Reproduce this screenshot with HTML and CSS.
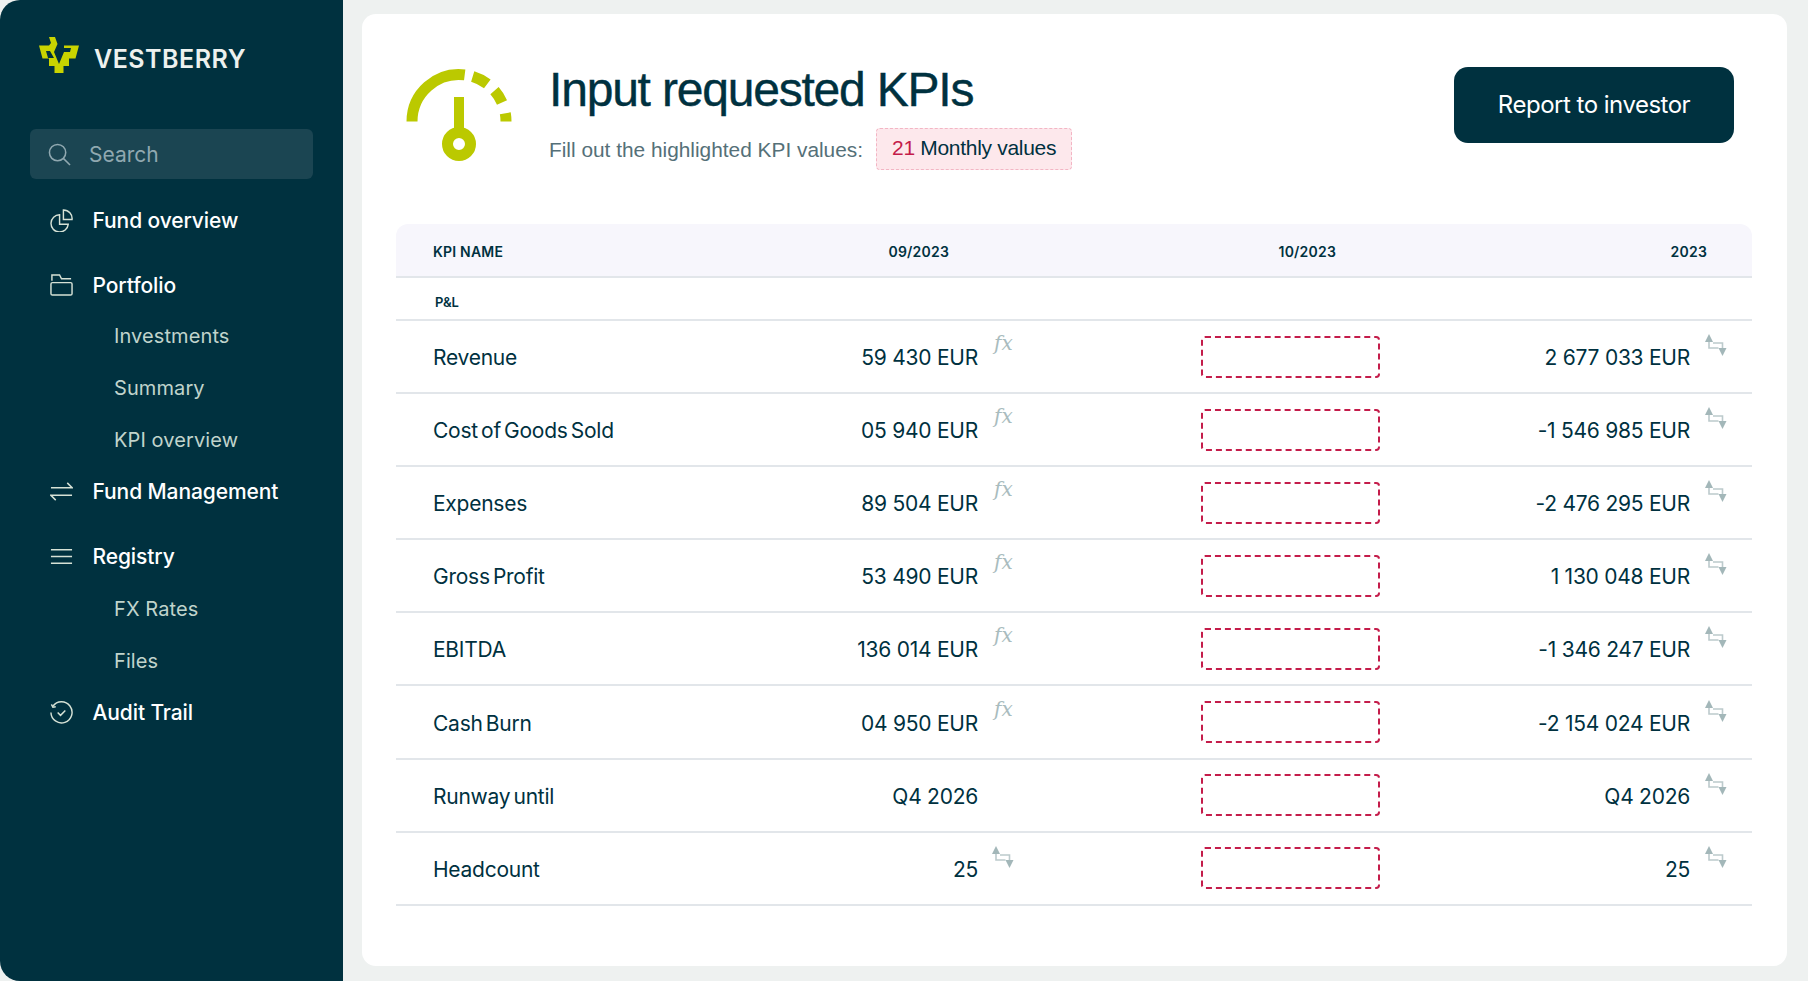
FILE: index.html
```html
<!DOCTYPE html>
<html lang="en">
<head>
    <meta charset="UTF-8">
    <meta name="viewport" content="width=device-width, initial-scale=1.0">
    <title>Input requested KPIs</title>
    <link rel="stylesheet" href="styles.css">
</head>
<body>
    <aside class="sidebar">
        <div class="brand">
            <svg class="brand-mark" viewBox="0 0 41 36"><path fill-rule="evenodd" d="M0 8.5H10L12 6 10 0H16L18.5 7 15 15 20 27 25 15H31L32 11H25V8.5H40L36.5 21.5H30V29H24.5V36H15.5V29H10V21.5H3.5ZM7 14H11L15 21H9Z"/></svg>
            <span class="brand-name">VESTBERRY</span>
        </div>
        <div class="search">
            <svg class="search-icon" viewBox="0 0 24 24"><circle cx="10" cy="10" r="8.5"/><path d="M16 16l7 7"/></svg>
            <span>Search</span>
        </div>
        <nav class="nav">
            <a class="nav-item spaced">
                <svg class="nav-icon" viewBox="0 0 24 24"><path d="M10 6a9 9 0 1 0 9 10h-9z"/><path d="M14 1a9 9 0 0 1 9 10h-9z"/></svg>
                Fund overview
            </a>
            <a class="nav-item">
                <svg class="nav-icon" viewBox="0 0 24 24"><path d="M2 7V1h8l2 4h10"/><rect x="1" y="9" width="22" height="13" rx="1.5"/></svg>
                Portfolio
            </a>
            <a class="nav-sub">Investments</a>
            <a class="nav-sub">Summary</a>
            <a class="nav-sub">KPI overview</a>
            <a class="nav-item spaced">
                <svg class="nav-icon" viewBox="0 0 24 24"><path d="M1 8h22l-5-5"/><path d="M23 16H1l5 5"/></svg>
                Fund Management
            </a>
            <a class="nav-item">
                <svg class="nav-icon" viewBox="0 0 24 24"><path d="M1 5h22M1 12h22M1 19h22"/></svg>
                Registry
            </a>
            <a class="nav-sub first">FX Rates</a>
            <a class="nav-sub">Files</a>
            <a class="nav-item">
                <svg class="nav-icon" viewBox="0 0 24 24"><path d="M3 5.5A11 11 0 1 1 1 12"/><path d="M1.5 3.5L3 6.5l3-.5"/><path d="M8 12l3 3 5-5"/></svg>
                Audit Trail
            </a>
        </nav>
    </aside>

    <main class="content">
        <header class="page-head">
            <svg class="gauge" viewBox="0 0 130 120">
                <path class="gauge-line" d="M17 66.5A47 47 0 0 1 69.7 19.85"/>
                <path class="gauge-line" d="M77.7 21.55A47 47 0 0 1 92.3 28.95"/>
                <path class="gauge-line" d="M99.5 35.7A47 47 0 0 1 107 47.4"/>
                <path class="gauge-line" d="M110.3 58.3A47 47 0 0 1 111 66.5"/>
                <rect class="gauge-fill" x="59" y="42" width="10" height="33"/>
                <circle class="gauge-line" cx="64" cy="89" r="11.5"/>
            </svg>
            <div class="head-text">
                <h1>Input requested KPIs</h1>
                <div class="head-sub">
                    <span class="sub-label">Fill out the highlighted KPI values:</span>
                    <span class="badge"><b>21</b> Monthly values</span>
                </div>
            </div>
            <button class="report-btn">Report to investor</button>
        </header>

        <section class="table">
            <div class="row head">
                <div>KPI NAME</div>
                <div class="h2">09/2023</div>
                <div class="h3">10/2023</div>
                <div class="h4">2023</div>
            </div>
            <div class="row group"><div>P&amp;L</div></div>

            <div class="row">
                <div class="name">Revenue</div>
                <div class="val">59 430 EUR<span class="fx">𝑓𝑥</span></div>
                <div class="cell-input"><div class="input-box"></div></div>
                <div class="val">2 677 033 EUR<svg class="swap"><use href="#swap"/></svg></div>
            </div>
            <div class="row">
                <div class="name">Cost of Goods Sold</div>
                <div class="val">05 940 EUR<span class="fx">𝑓𝑥</span></div>
                <div class="cell-input"><div class="input-box"></div></div>
                <div class="val">-1 546 985 EUR<svg class="swap"><use href="#swap"/></svg></div>
            </div>
            <div class="row">
                <div class="name">Expenses</div>
                <div class="val">89 504 EUR<span class="fx">𝑓𝑥</span></div>
                <div class="cell-input"><div class="input-box"></div></div>
                <div class="val">-2 476 295 EUR<svg class="swap"><use href="#swap"/></svg></div>
            </div>
            <div class="row">
                <div class="name">Gross Profit</div>
                <div class="val">53 490 EUR<span class="fx">𝑓𝑥</span></div>
                <div class="cell-input"><div class="input-box"></div></div>
                <div class="val">1 130 048 EUR<svg class="swap"><use href="#swap"/></svg></div>
            </div>
            <div class="row">
                <div class="name">EBITDA</div>
                <div class="val">136 014 EUR<span class="fx">𝑓𝑥</span></div>
                <div class="cell-input"><div class="input-box"></div></div>
                <div class="val">-1 346 247 EUR<svg class="swap"><use href="#swap"/></svg></div>
            </div>
            <div class="row">
                <div class="name">Cash Burn</div>
                <div class="val">04 950 EUR<span class="fx">𝑓𝑥</span></div>
                <div class="cell-input"><div class="input-box"></div></div>
                <div class="val">-2 154 024 EUR<svg class="swap"><use href="#swap"/></svg></div>
            </div>
            <div class="row">
                <div class="name">Runway until</div>
                <div class="val">Q4 2026<span class="icon-gap"></span></div>
                <div class="cell-input"><div class="input-box"></div></div>
                <div class="val">Q4 2026<svg class="swap"><use href="#swap"/></svg></div>
            </div>
            <div class="row">
                <div class="name">Headcount</div>
                <div class="val">25<svg class="swap mid"><use href="#swap"/></svg></div>
                <div class="cell-input"><div class="input-box"></div></div>
                <div class="val">25<svg class="swap"><use href="#swap"/></svg></div>
            </div>
        </section>
    </main>

    <svg class="defs" width="0" height="0">
        <symbol id="swap" viewBox="0 0 22 22">
            <path d="M4 7v7h9.5M8 9h9.5v5" fill="none" stroke="#bccaCC" stroke-width="1.6"/>
            <path d="M0 8L4 0l4 8z" fill="#a3b7b9"/>
            <path d="M13.5 14L17.5 22l4-8z" fill="#a3b7b9"/>
        </symbol>
    </svg>
</body>
</html>
```

FILE: styles.css
```css
* {
    margin: 0;
    padding: 0;
    box-sizing: border-box;
}

body {
    display: flex;
    height: 981px;
    overflow: hidden;
    background: #eef1f0;
    font-family: 'Inter', 'Liberation Sans', sans-serif;
    color: #00313f;
}

/* sidebar */
.sidebar {
    width: 343px;
    flex-shrink: 0;
    background: #00313f;
    border-radius: 20px 0 0 20px;
    padding: 37px 30px 0 30px;
}

.brand {
    display: flex;
    align-items: center;
    gap: 14px;
    padding-left: 9px;
    height: 36px;
}

.brand-mark {
    width: 41px;
    height: 36px;
    fill: #c9d400;
}

.brand-name {
    margin-top: 8px;
    font-size: 25px;
    font-weight: 600;
    letter-spacing: 0.5px;
    color: #edf1ef;
}

.search {
    display: flex;
    align-items: center;
    gap: 18px;
    height: 50px;
    margin-top: 56px;
    padding-left: 18px;
    background: #1b4552;
    border-radius: 6px;
    font-size: 21px;
    color: #90a8b0;
}

.search-icon {
    width: 23px;
    height: 23px;
    fill: none;
    stroke: #90a8b0;
    stroke-width: 1.6;
}

.nav {
    margin-top: 16px;
}

.nav-item {
    display: flex;
    align-items: center;
    gap: 19.5px;
    height: 50px;
    padding-left: 20px;
    font-size: 21px;
    font-weight: 500;
    letter-spacing: -0.1px;
    color: #fff;
}

.nav-item.spaced {
    margin-bottom: 15px;
}

.nav-icon {
    width: 23px;
    height: 23px;
    fill: none;
    stroke: #d6e2d6;
    stroke-width: 1.5;
}

.nav-sub {
    display: flex;
    align-items: center;
    height: 52px;
    padding-left: 84px;
    font-size: 20px;
    letter-spacing: 0.1px;
    color: #c0d4cc;
}

.nav-sub.first {
    margin-top: 2px;
}

/* main card */
.content {
    width: 1425px;
    height: 952px;
    margin: 14px 0 0 19px;
    padding: 0 34px;
    background: #fff;
    border-radius: 14px;
}

.page-head {
    display: flex;
    position: relative;
    height: 210px;
    padding-top: 41px;
}

.gauge {
    width: 130px;
    height: 120px;
    margin-left: -1px;
}

.gauge-line {
    fill: none;
    stroke: #bbc900;
    stroke-width: 11;
}

.gauge-fill {
    fill: #bbc900;
}

.head-text {
    margin-left: 24px;
}

h1 {
    font-family: 'Liberation Sans', sans-serif;
    font-size: 48px;
    font-weight: 400;
    letter-spacing: -1.2px;
    line-height: 56px;
    margin-top: 7px;
    -webkit-text-stroke: 0.4px #00313f;
}

.head-sub {
    display: flex;
    align-items: center;
    gap: 13px;
    margin-top: 9px;
    font-family: 'Liberation Sans', sans-serif;
    font-size: 20.85px;
    color: #557078;
}

.sub-label {
    padding-top: 3px;
}

.badge {
    display: inline-block;
    margin-top: 1px;
    padding: 0 15px;
    height: 42px;
    line-height: 38px;
    background: #fde8ec;
    border: 1px dashed #f3b5c4;
    border-radius: 4px;
    font-size: 21px;
    letter-spacing: -0.3px;
    color: #00313f;
}

.badge b {
    font-weight: 400;
    color: #c41c4a;
}

.report-btn {
    position: absolute;
    top: 53px;
    right: 19px;
    width: 280px;
    height: 76px;
    padding-bottom: 2px;
    border: none;
    border-radius: 14px;
    background: #00313f;
    color: #fff;
    font-family: 'Inter', sans-serif;
    font-size: 24px;
    letter-spacing: -0.5px;
}

/* table */
.table {
    width: 1356px;
}

.row {
    display: grid;
    grid-template-columns: 404px 216px 364px 347px;
    padding-right: 25px;
    height: 73.1px;
    align-items: center;
    border-bottom: 2px solid #e2e6ea;
    font-size: 21px;
    letter-spacing: -0.25px;
}

.row.head {
    height: 54px;
    padding-top: 3px;
    background: #f7f6fc;
    border-radius: 12px 12px 0 0;
    font-size: 14px;
    font-weight: 600;
    letter-spacing: 0.2px;
}

.row.group {
    height: 43px;
    padding-top: 6px;
    font-size: 13px;
    font-weight: 600;
    letter-spacing: 0;
}

.row.head > div:first-child,
.name {
    padding-left: 37px;
}

.row.group > div:first-child {
    padding-left: 39px;
}

.name, .val {
    padding-top: 2px;
}

.name {
    word-spacing: -2.5px;
}

.h2, .h3, .h4 {
    text-align: right;
}

.h2 { padding-right: 67px; }
.h3 { padding-right: 44px; }
.h4 { padding-right: 20px; }

.val {
    display: flex;
    justify-content: flex-end;
    align-items: center;
}

.fx {
    align-self: flex-start;
    width: 22px;
    margin: -14px 0 0 16px;
    font-family: 'DejaVu Serif', 'DejaVu Sans', serif;
    font-size: 20px;
    line-height: 24px;
    letter-spacing: 0;
    color: #a9bcbe;
}

.icon-gap {
    width: 22px;
    margin-left: 16px;
}

.swap {
    align-self: flex-start;
    width: 22px;
    height: 22px;
    margin: -11px 0 0 15px;
}

.swap.mid {
    margin-left: 14px;
    margin-right: 2px;
}

.cell-input {
    display: flex;
    justify-content: flex-end;
}

.input-box {
    width: 179px;
    height: 42px;
    border: 2px dashed #c41c4a;
    border-radius: 4px;
}

.defs {
    position: absolute;
}
```
